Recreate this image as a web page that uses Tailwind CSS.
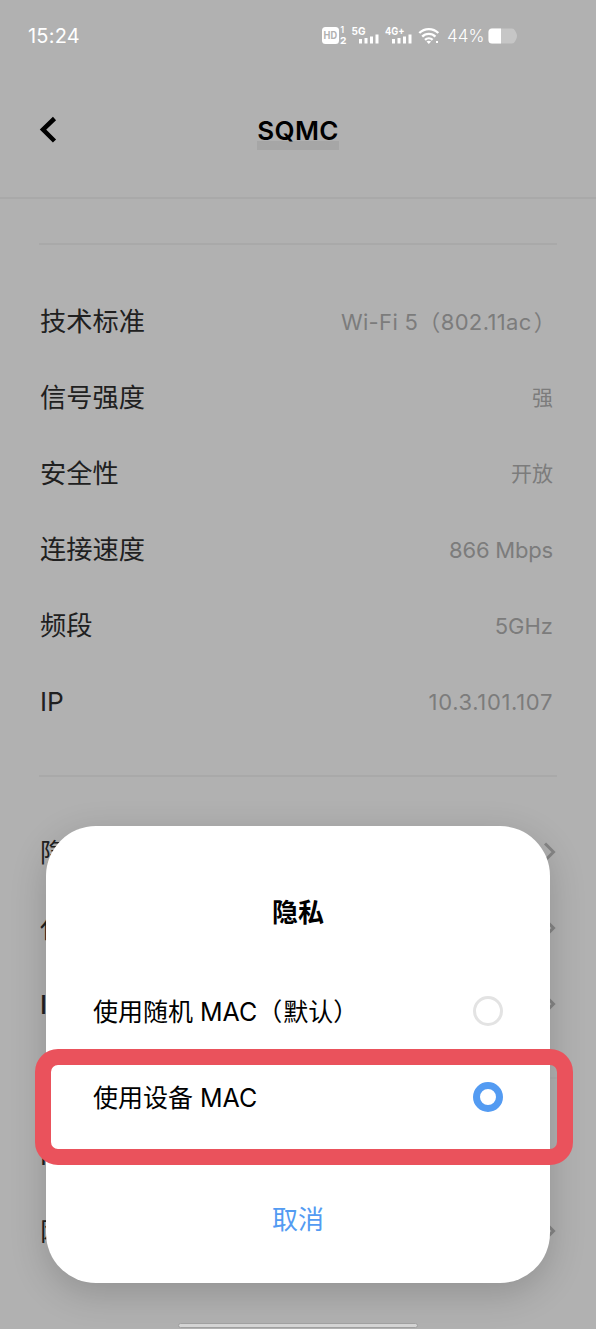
<!DOCTYPE html>
<html lang="zh-CN">
<head>
<meta charset="utf-8">
<title>SQMC</title>
<script src="https://cdn.jsdelivr.net/npm/@tailwindcss/browser@4"></script>
</head>
<body class="bg-[#b1b1b1]">
<div class="relative flex h-[1329px] w-[596px] flex-col overflow-hidden bg-[#b1b1b1] font-['Inter','Noto_Sans_CJK_SC',sans-serif] text-[#202020]">
  <div class="flex h-[72px] shrink-0 items-center justify-between pl-7 pr-[78px] text-white">
    <span class="text-[20px] tracking-[0.2px]">15:24</span>
    <div class="flex items-center">
      <svg class="h-6 w-[120px]" viewBox="0 0 120 24" fill="#fff" font-family="Inter, sans-serif" font-weight="700">
        <rect x="2" y="3" width="17" height="17" rx="3.5"/>
        <text x="3.6" y="15.3" font-size="10.5" fill="#b1b1b1" textLength="13.5" lengthAdjust="spacingAndGlyphs">HD</text>
        <text x="20.5" y="9" font-size="8.500" font-weight="600">1</text>
        <text x="20" y="20" font-size="9.500" textLength="6.500" lengthAdjust="spacingAndGlyphs">2</text>
        <text x="31.500" y="11" font-size="10.500" textLength="14" lengthAdjust="spacingAndGlyphs">5G</text>
        <path d="M39 15h3v4.500h-3zM44.500 14h3v5.500h-3zM50 12.500h3v7h-3zM55.500 10.500h3v9h-3z"/>
        <text x="65" y="11" font-size="10.500" textLength="19.500" lengthAdjust="spacingAndGlyphs">4G+</text>
        <path d="M72 15h3v4.500h-3zM77.500 14h3v5.500h-3zM83 12.500h3v7h-3zM88.500 10.500h3v9h-3z"/>
        <g fill="none" stroke="#fff" stroke-width="2.400" stroke-linecap="butt">
          <path d="M99.300 9a13.500 13.500 0 0 1 19 0"/>
          <path d="M102.200 12.600a9.300 9.300 0 0 1 13.200 0"/>
          <path d="M105 15.900a5.500 5.500 0 0 1 7.600 0"/>
        </g>
        <path d="M106.500 17.500q2.300-1.600 4.600 0l-2.300 2.500zM116 17h2v2h-2z"/>
      </svg>
      <span class="ml-[7px] w-[37px] whitespace-nowrap pt-px text-[17px] font-light">44%</span>
      <svg class="ml-[4px] h-[16px] w-[30px]" viewBox="0 0 30 16">
        <path d="M4 .5h20q2 0 3 2l1.300 2.500q1.400 3 0 6l-1.300 2.500q-1 2-3 2H4q-3.500 0-3.500-3.500V4Q.5.5 4 .5z" fill="#c6c6c6"/>
        <path d="M4 .5h9v15H4q-3.500 0-3.500-3.500V4Q.5.5 4 .5z" fill="#fff"/>
      </svg>
    </div>
  </div>
  <header class="grid h-[127px] shrink-0 grid-cols-[1fr_auto_1fr] items-center border-b-2 border-[#a9a9a9] px-[39px] pb-[10px]">
    <svg class="h-7 w-[18px]" viewBox="0 0 18 28" fill="none" stroke="#000" stroke-width="4.500"><path d="M15.500 2.500L4 13.500l11.500 11.500"/></svg>
    <h1 class="mt-[5px] h-[36px] bg-linear-to-b from-transparent from-76% to-[#a6a6a6] to-76% text-[26px] leading-[33px] font-semibold tracking-[0.3px] text-black">SQMC</h1>
  </header>
  <main class="flex flex-col px-[39px]">
    <hr class="mt-[44px] h-0.5 border-0 bg-[#a9a9a9]">
    <section class="mt-[39px] flex flex-col px-px text-[26.250px]">
      <div class="flex h-[76px] items-center justify-between"><span>技术标准</span><span class="whitespace-nowrap text-[22px] tracking-[0.350px] text-[#7c7c7c]">Wi-Fi 5（802.11ac<span class="ml-[2px]">）</span></span></div>
      <div class="flex h-[76px] items-center justify-between"><span>信号强度</span><span class="pr-[3px] text-[21px] text-[#7c7c7c]">强</span></div>
      <div class="flex h-[76px] items-center justify-between"><span>安全性</span><span class="pr-[3px] text-[21px] text-[#7c7c7c]">开放</span></div>
      <div class="flex h-[76px] items-center justify-between"><span>连接速度</span><span class="pr-[3px] text-[22px] tracking-[-0.200px] text-[#7c7c7c]">866 Mbps</span></div>
      <div class="flex h-[76px] items-center justify-between"><span>频段</span><span class="pr-[3px] text-[22px] text-[#7c7c7c]">5GHz</span></div>
      <div class="flex h-[76px] items-center justify-between"><span>IP</span><span class="pr-[3px] text-[22px] tracking-[0.650px] text-[#7c7c7c]">10.3.101.107</span></div>
    </section>
    <hr class="mt-[35px] h-0.5 border-0 bg-[#a9a9a9]">
    <section class="mt-[37px] flex flex-col px-px text-[26px]">
      <div class="flex h-[76px] items-center justify-between"><span>隐私</span><svg class="h-5 w-3" viewBox="0 0 12 20" fill="none" stroke="#858585" stroke-width="3"><path d="M1 1.500L9.500 10 1 18.500"/></svg></div>
      <div class="flex h-[76px] items-center justify-between"><span>代理</span><svg class="h-5 w-3" viewBox="0 0 12 20" fill="none" stroke="#858585" stroke-width="3"><path d="M1 1.500L9.500 10 1 18.500"/></svg></div>
      <div class="flex h-[76px] items-center justify-between"><span class="font-medium">IP</span><svg class="h-5 w-3" viewBox="0 0 12 20" fill="none" stroke="#858585" stroke-width="3"><path d="M1 1.500L9.500 10 1 18.500"/></svg></div>
    </section>
    <hr class="mt-[35px] h-0.5 border-0 bg-[#adadad]">
    <section class="mt-[38px] flex flex-col px-px text-[26px]">
      <div class="flex h-[76px] items-center"><span>IP</span></div>
      <div class="flex h-[76px] items-center justify-between"><span>网关</span><svg class="h-5 w-3" viewBox="0 0 12 20" fill="none" stroke="#858585" stroke-width="3"><path d="M1 1.500L9.500 10 1 18.500"/></svg></div>
    </section>
  </main>

  <div class="absolute top-[826px] left-[46px] flex h-[457px] w-[504px] flex-col rounded-[50px] bg-white px-[47px] text-[25px] text-black shadow-[0_10px_36px_rgba(0,0,0,0.18)]">
    <h2 class="mt-[67px] text-center text-[26px] leading-10 font-bold">隐私</h2>
    <div class="mt-[35px] flex h-[86px] items-center justify-between"><span class="pt-1">使用随机 MAC（<span class="ml-px">默认）</span></span><span class="size-[30px] rounded-full border-[3px] border-[#e3e3e3]"></span></div>
    <div class="flex h-[86px] items-center justify-between"><span class="pt-1">使用设备 MAC</span><span class="size-[30px] rounded-full border-[7px] border-[#539bf2]"></span></div>
    <button class="mt-[60px] text-[26px] leading-10 font-normal text-[#539bf2]">取消</button>
  </div>
  <div class="absolute top-[1049px] left-[35px] h-[116px] w-[538px] rounded-[23px] border-16 border-[#ea525c]"></div>
  <div class="absolute top-[1323px] left-[178px] h-[5px] w-[240px] rounded-full border border-[#a0a0a0] bg-[#d4d4d4]"></div>
</div>
</body>
</html>
